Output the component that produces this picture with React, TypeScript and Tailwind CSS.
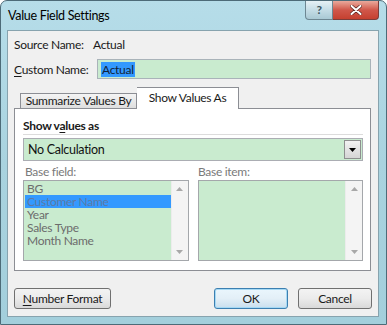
import React from "react";

const font = { fontFamily: 'Lato, "Noto Sans", sans-serif' };

function UpArrow() {
  return (
    <svg width="7" height="4" viewBox="0 0 7 4">
      <path d="M0 4 L3.5 0 L7 4 Z" fill="#a8a8a8" />
    </svg>
  );
}
function DownArrow({ color = "#a8a8a8" }: { color?: string }) {
  return (
    <svg width="7" height="4" viewBox="0 0 7 4">
      <path d="M0 0 L7 0 L3.5 4 Z" fill={color} />
    </svg>
  );
}

function Scrollbar() {
  return (
    <div className="w-[17px] h-full bg-[#f4f4f4] border-l border-[#ececec] flex flex-col items-center justify-between py-[6px]">
      <UpArrow />
      <DownArrow />
    </div>
  );
}

export default function App() {
  const items = ["BG", "Customer Name", "Year", "Sales Type", "Month Name"];
  return (
    <div
      className="w-[387px] h-[325px] flex flex-col border border-[#4d6b78] rounded-t-[7px] overflow-hidden bg-gradient-to-b from-[#b6dde9] via-[#a9d3df] to-[#a3cfdc] text-[12px] tracking-[-0.3px] text-[#1a1a1a] whitespace-nowrap"
      style={font}
    >
      {/* Title bar */}
      <div className="h-[29px] flex items-start shrink-0">
        <div className="pl-[7px] pt-[7px] leading-[16px] text-[12.5px] text-black">Value Field Settings</div>
        <div className="ml-auto mr-[7px] flex">
          <div className="w-[28px] h-[19px] rounded-bl-[4px] border border-t-0 border-[#6d8792] bg-gradient-to-b from-[#e6f1f5] via-[#c5dde6] to-[#a9c9d4] flex items-center justify-center">
            <span className="text-[12px] font-bold leading-none text-[#3b5560]">?</span>
          </div>
          <div className="w-[46px] h-[19px] rounded-br-[4px] border border-l-0 border-t-0 border-[#7b3d3a] bg-gradient-to-b from-[#e9a99c] via-[#d0574a] to-[#c5402f] flex items-center justify-center">
            <svg width="12" height="10" viewBox="0 0 12 10">
              <path d="M1.5 1 L10.5 9 M10.5 1 L1.5 9" stroke="#5a2520" strokeWidth="3.4" strokeLinecap="round" />
              <path d="M1.5 1 L10.5 9 M10.5 1 L1.5 9" stroke="#ffffff" strokeWidth="2" strokeLinecap="round" />
            </svg>
          </div>
        </div>
      </div>

      {/* Client area */}
      <div className="ml-[6px] mr-[7px] mb-[7px] flex-1 bg-[#f0f0f0] border border-[#87a3ae] flex flex-col">
        {/* Source name */}
        <div className="mt-[6px] h-[15px] flex items-center pl-[6px] leading-[15px]">
          <span className="w-[79px]">Source Name:</span>
          <span>Actual</span>
        </div>
        {/* Custom name */}
        <div className="mt-[7px] h-[20px] flex items-center pl-[6px]">
          <span className="w-[83px] leading-[15px]">
            <span className="underline underline-offset-2">C</span>ustom Name:
          </span>
          <div className="w-[274px] h-[20px] bg-[#c9ebcf] border border-[#a9b3b9] flex items-center pl-[3px]">
            <span className="bg-[#3399ff] text-[#10233a] leading-[15px] px-[1px]">Actual</span>
          </div>
        </div>

        {/* Tabs */}
        <div className="mt-[7px] ml-[6px] mr-[7px] flex flex-col">
          <div className="flex items-end pl-[6px] h-[22px]">
            <div className="w-[117px] h-[15px] border border-b-0 border-[#8c8e94] bg-gradient-to-b from-[#f4f4f4] to-[#dedede] flex items-center justify-center leading-[14px]">
              Summarize Values By
            </div>
            <div className="w-[102px] h-[22px] border border-b-0 border-l-0 border-[#8c8e94] bg-white -mb-px relative flex items-start justify-center pt-[2px] leading-[15px]">
              Show Values As
            </div>
          </div>
          <div className="h-[163px] border border-[#8c8e94] bg-white flex flex-col pl-[8px] pr-[7px]">
            <div className="mt-[9px] leading-[15px] font-bold">
              Show v<span className="underline underline-offset-2">a</span>lues as
            </div>
            <div className="h-px bg-[#dcdcdc] mt-[1px]" />
            <div className="mt-[3px] h-[23px] border border-[#abadb3] bg-[#c9ebcf] flex items-center">
              <span className="pl-[4px] leading-[15px] text-[12.5px] text-[#111]">No Calculation</span>
              <div className="ml-auto mr-[1px] w-[17px] h-[19px] border border-[#8e8f8f] bg-gradient-to-b from-[#f2f2f2] to-[#d5d5d5] flex items-center justify-center">
                <DownArrow color="#000" />
              </div>
            </div>
            <div className="mt-[3px] flex leading-[15px] text-[#7a7a7a]">
              <span className="w-[175px] pl-[2px]">Base field:</span>
              <span>Base item:</span>
            </div>
            <div className="mt-[1px] flex gap-[9px]">
              <div className="w-[166px] h-[81px] border border-[#a4a7ab] bg-[#c9ebcf] flex">
                <div className="flex-1 flex flex-col pt-[1px] pl-[1px]">
                  {items.map((it, i) => (
                    <div
                      key={it}
                      className={
                        "h-[13px] leading-[13px] pl-[2px] " +
                        (i === 1 ? "bg-[#3399ff] text-[#5c7aa6]" : "text-[#6c6c6c]")
                      }
                    >
                      {it}
                    </div>
                  ))}
                </div>
                <Scrollbar />
              </div>
              <div className="w-[166px] h-[81px] border border-[#a4a7ab] bg-[#c9ebcf] flex">
                <div className="flex-1" />
                <Scrollbar />
              </div>
            </div>
          </div>
        </div>

        {/* Buttons */}
        <div className="mt-[17px] flex pl-[6px] pr-[6px]">
          <button className="w-[97px] h-[21px] rounded-[3px] border border-[#707070] bg-gradient-to-b from-[#f3f3f3] via-[#ebebeb] to-[#d9d9d9] leading-[15px]">
            <span className="underline underline-offset-2">N</span>umber Format
          </button>
          <button className="ml-auto w-[74px] h-[21px] rounded-[3px] border border-[#3c7fb1] bg-gradient-to-b from-[#eaf6fd] via-[#e3eff7] to-[#c9dfee] shadow-[inset_0_0_0_1px_#a6d9f4] leading-[15px]">
            OK
          </button>
          <button className="ml-[10px] w-[74px] h-[21px] rounded-[3px] border border-[#707070] bg-gradient-to-b from-[#f3f3f3] via-[#ebebeb] to-[#d9d9d9] leading-[15px]">
            Cancel
          </button>
        </div>
      </div>
    </div>
  );
}
